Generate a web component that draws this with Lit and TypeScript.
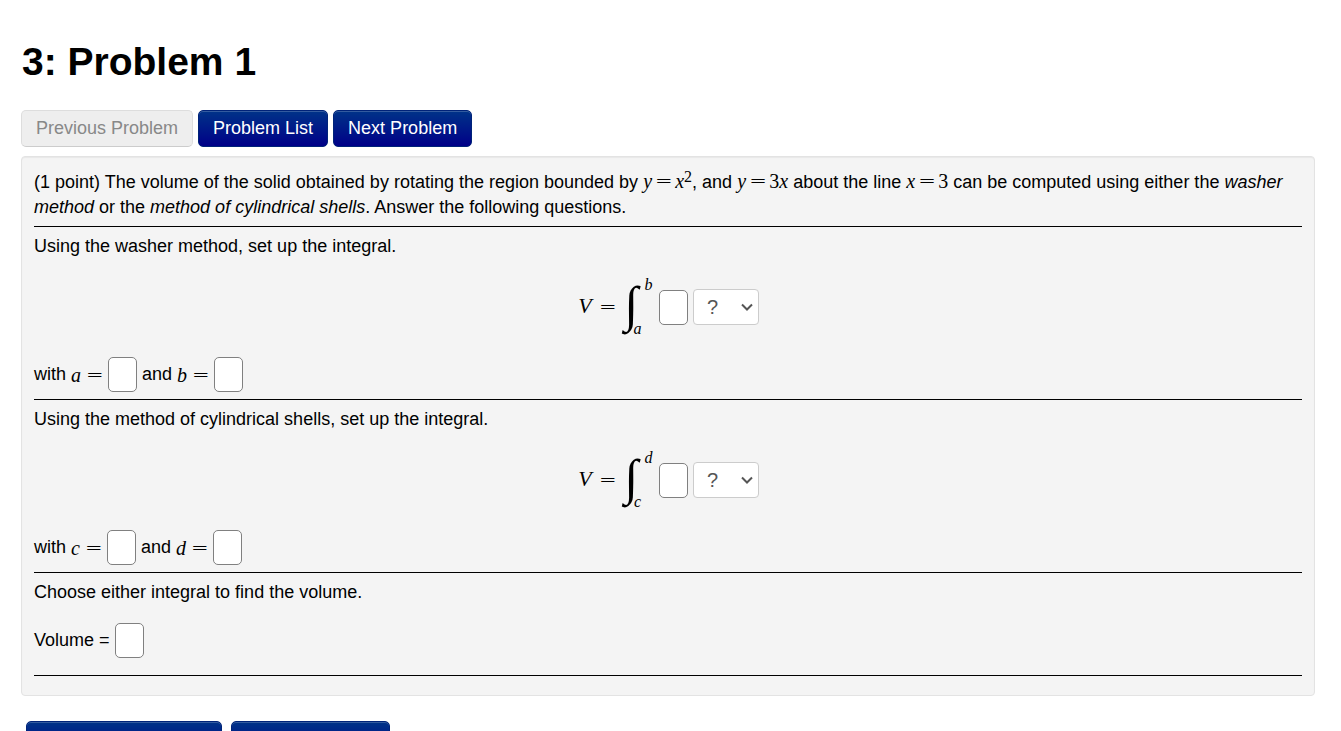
import { LitElement, html, css } from "lit";
import { customElement, property } from "lit/decorators.js";

const mathStyles = css`
  .v {
    font: italic 20px/20px "Liberation Serif", serif;
    display: inline-block;
    min-width: 9px;
    text-align: center;
  }
  .n {
    font: 20px/20px "Liberation Serif", serif;
  }
  .rel {
    font: 200 21px/20px "DejaVu Sans Light", "DejaVu Sans", sans-serif;
    display: inline-block;
    width: 17px;
    text-align: center;
  }
  .box {
    box-sizing: border-box;
    width: 29px;
    height: 35px;
    margin: 0;
    padding: 4px 5px;
    border: 1px solid #808080;
    border-radius: 5px;
    background: #fff;
    font: 18px/25px "Liberation Sans", Arial, sans-serif;
  }
`;

@customElement("integral-row")
export class IntegralRow extends LitElement {
  @property() lower = "";
  @property() upper = "";

  static styles = [
    mathStyles,
    css`
      :host {
        display: flex;
        align-items: center;
        justify-content: center;
        height: 96px;
        padding-bottom: 2px;
      }
      .v.big {
        font-size: 22px;
        width: 16px;
        padding-bottom: 2px;
      }
      .rel {
        margin: 0 4px 0 6px;
      }
      .integral {
        font: italic 50px/48px "Liberation Serif", serif;
        width: 22px;
        padding-bottom: 6px;
        text-align: center;
      }
      .limits {
        display: flex;
        flex-direction: column;
        justify-content: space-between;
        height: 62px;
        width: 20px;
        margin: 0 6px 0 -9px;
      }
      .limits .v {
        font-size: 16px;
        line-height: 18px;
      }
      .limits .v:first-child {
        align-self: flex-end;
      }
      .limits .v:last-child {
        align-self: flex-start;
      }
      .picker {
        display: grid;
        align-items: center;
        margin-left: 5px;
      }
      select {
        grid-area: 1 / 1;
        appearance: none;
        box-sizing: border-box;
        width: 66px;
        height: 36px;
        padding: 0 28px 0 13px;
        border: 1px solid #ccc;
        border-radius: 4px;
        background: #fff;
        color: #555;
        font: 20px/25px "Liberation Sans", Arial, sans-serif;
      }
      svg {
        grid-area: 1 / 1;
        justify-self: end;
        margin-right: 6px;
        pointer-events: none;
      }
    `,
  ];

  render() {
    return html`
      <span class="v big">V</span><span class="rel">=</span>
      <span class="integral">∫</span>
      <span class="limits"><span class="v">${this.upper}</span><span class="v">${this.lower}</span></span>
      <input class="box" type="text" aria-label="Integrand" />
      <span class="picker">
        <select aria-label="Variable of integration">
          <option>?</option>
          <option>dx</option>
          <option>dy</option>
        </select>
        <svg width="12" height="8" viewBox="0 0 12 8" fill="none" stroke="#555" stroke-width="2">
          <path d="M1 1.5 6 6.5 11 1.5" />
        </svg>
      </span>
    `;
  }
}

@customElement("app-root")
export class AppRoot extends LitElement {
  static styles = [
    mathStyles,
    css`
      :host {
        display: block;
        padding: 38px 26px 20px 21px;
        background: #fff;
        color: #000;
        font: 18px/25px "Liberation Sans", Arial, sans-serif;
      }
      h1 {
        margin: 0 0 24px;
        padding-left: 1px;
        font-size: 39px;
        line-height: 48px;
      }
      nav {
        display: flex;
        gap: 5px;
        margin-bottom: 9px;
      }
      .btn {
        box-sizing: border-box;
        height: 37px;
        padding: 0 14px;
        border: 1px solid #002379;
        border-radius: 5px;
        background: linear-gradient(#003388, #000088);
        box-shadow: inset 0 1px 0 rgba(255, 255, 255, 0.2);
        color: #fff;
        font: 18px/25px "Liberation Sans", Arial, sans-serif;
      }
      .btn:disabled {
        border-color: #ddd #ddd #ccc;
        background: #eee;
        box-shadow: none;
        color: #888;
      }
      .panel {
        padding: 13px 12px 19px;
        border: 1px solid #e3e3e3;
        border-radius: 4px;
        background: #f4f4f4;
        box-shadow: inset 0 1px 1px rgba(0, 0, 0, 0.05);
      }
      p {
        margin: 0;
      }
      .intro {
        padding-bottom: 6px;
      }
      .intro .rel {
        margin: 0 3px;
      }
      .part {
        padding: 7px 0;
        border-top: 1px solid #000;
      }
      .answers {
        display: flex;
        align-items: center;
        gap: 5px;
        height: 35px;
      }
      .answers label {
        display: flex;
        align-items: center;
        gap: 5px;
      }
      .last {
        padding-bottom: 17px;
        border-bottom: 1px solid #000;
      }
      .last .answers {
        margin-top: 18px;
      }
      sup {
        font: 16px/16px "Liberation Serif", serif;
        vertical-align: 6px;
        line-height: 0;
      }
      .actions {
        display: flex;
        gap: 9px;
        padding: 25px 5px 0;
      }
    `,
  ];

  private eq(name: string) {
    return html`<span class="v">${name}</span><span class="rel">=</span>`;
  }

  private bounds(first: string, second: string) {
    return html`
      <div class="answers">
        <label for=${first}>with ${this.eq(first)}</label><input class="box" id=${first} type="text" />
        <label for=${second}>and ${this.eq(second)}</label><input class="box" id=${second} type="text" />
      </div>
    `;
  }

  render() {
    return html`
      <h1>3: Problem 1</h1>
      <nav>
        <button class="btn" disabled>Previous Problem</button>
        <button class="btn">Problem List</button>
        <button class="btn">Next Problem</button>
      </nav>
      <main class="panel">
        <p class="intro">
          (1 point) The volume of the solid obtained by rotating the region bounded by
          ${this.eq("y")}<span class="v">x</span><sup>2</sup>, and
          ${this.eq("y")}<span class="n">3</span><span class="v">x</span> about the line
          ${this.eq("x")}<span class="n">3</span> can be computed using either the
          <em>washer method</em> or the <em>method of cylindrical shells</em>. Answer the following questions.
        </p>
        <section class="part">
          <p>Using the washer method, set up the integral.</p>
          <integral-row lower="a" upper="b"></integral-row>
          ${this.bounds("a", "b")}
        </section>
        <section class="part">
          <p>Using the method of cylindrical shells, set up the integral.</p>
          <integral-row lower="c" upper="d"></integral-row>
          ${this.bounds("c", "d")}
        </section>
        <section class="part last">
          <p>Choose either integral to find the volume.</p>
          <div class="answers">
            <label for="volume">Volume =</label><input class="box" id="volume" type="text" />
          </div>
        </section>
      </main>
      <div class="actions">
        <button class="btn">Preview My Answers</button>
        <button class="btn">Submit Answers</button>
      </div>
    `;
  }
}
